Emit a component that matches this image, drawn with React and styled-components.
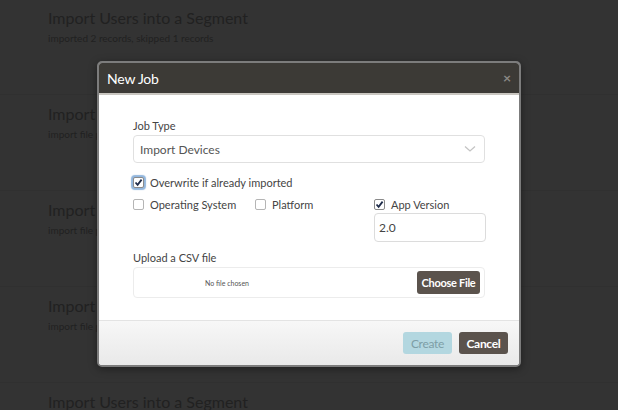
import React from 'react';
import styled, { createGlobalStyle } from 'styled-components';

const GlobalStyle = createGlobalStyle`
  html, body {
    margin: 0;
    padding: 0;
    background: #333333;
    font-family: Lato, "Open Sans", sans-serif;
  }
`;

const Page = styled.div`
  position: relative;
  width: 618px;
  height: 410px;
  overflow: hidden;
  background: #333333;
`;

const JobList = styled.ul`
  list-style: none;
  margin: 0;
  padding: 0;
`;

const JobItem = styled.li`
  height: 95px;
  padding: 8px 0 0 48px;
  box-sizing: border-box;
  border-bottom: 1px solid #303030;
  margin-bottom: 1px;
`;

const JobTitle = styled.div`
  font-size: 16px;
  line-height: 20px;
  color: #212121;
`;

const JobMeta = styled.div`
  font-size: 10px;
  line-height: 14px;
  margin-top: 3px;
  color: #212121;
`;

const Modal = styled.div`
  position: absolute;
  left: 97px;
  top: 61px;
  width: 424px;
  height: 306px;
  box-sizing: border-box;
  border: 2px solid #7c7c7c;
  border-radius: 5px;
  overflow: hidden;
  display: flex;
  flex-direction: column;
  background: #fff;
  box-shadow: 0 2px 8px rgba(0, 0, 0, 0.4);
`;

const Header = styled.div`
  height: 32px;
  flex: none;
  display: flex;
  align-items: center;
  justify-content: space-between;
  padding: 0 8px;
  background: #3c3a36;
  border-bottom: 2px solid #c9c6c0;
  box-sizing: border-box;
`;

const HeaderTitle = styled.div`
  color: #fff;
  font-size: 14px;
  letter-spacing: -0.2px;
`;

const Close = styled.span`
  color: #8a8884;
  font-size: 14px;
  font-weight: 700;
  line-height: 1;
`;

const Body = styled.div`
  flex: 1;
  padding: 24px 34px 0 34px;
  display: flex;
  flex-direction: column;
`;

const Label = styled.div`
  font-size: 11px;
  line-height: 14px;
  color: #444;
  margin-top: ${p => p.$top || 0}px;
`;

const Select = styled.div`
  margin-top: 2px;
  height: 28px;
  box-sizing: border-box;
  border: 1px solid #e0e0e0;
  border-radius: 4px;
  display: flex;
  align-items: center;
  justify-content: space-between;
  padding: 0 8px 0 6px;
  font-size: 12px;
  color: #555;
`;

const CheckLine = styled.div`
  display: flex;
  margin-top: 11px;
`;

const CheckRow = styled.div`
  display: grid;
  grid-template-columns: 122px 119px 113px;
  margin-top: 6px;
`;

const CheckCell = styled.div`
  display: flex;
  flex-direction: column;
`;

const Check = styled.label`
  display: flex;
  align-items: center;
  gap: 6px;
  height: 16px;
  font-size: 11px;
  color: #444;
  white-space: nowrap;
`;

const Box = styled.span`
  width: 11px;
  height: 11px;
  box-sizing: border-box;
  border: 1px solid ${p => (p.$checked ? '#8a8a8a' : '#b5b5b5')};
  border-radius: 2px;
  background: #fff;
  display: flex;
  align-items: center;
  justify-content: center;
  box-shadow: ${p => (p.$focus ? '0 0 1px 2px #92b6dd' : 'none')};
`;

const TextInput = styled.div`
  margin-top: 1px;
  height: 29px;
  width: 112px;
  box-sizing: border-box;
  border: 1px solid #dcdcdc;
  border-radius: 4px;
  display: flex;
  align-items: center;
  padding-left: 4px;
  font-size: 12px;
  color: #444;
`;

const FileBox = styled.div`
  margin-top: 2px;
  height: 31px;
  box-sizing: border-box;
  border: 1px solid #ececec;
  border-radius: 4px;
  display: flex;
  align-items: center;
  justify-content: space-between;
  padding: 0 4px 0 71px;
`;

const NoFile = styled.span`
  font-size: 7px;
  color: #555;
`;

const Button = styled.button`
  font-family: Lato, "Open Sans", sans-serif;
  border: none;
  border-radius: 3px;
  padding: 0;
  width: ${p => p.$w}px;
  height: ${p => p.$h}px;
  font-size: ${p => p.$size || 11}px;
  font-weight: ${p => (p.$light ? 400 : 700)};
  letter-spacing: -0.3px;
  background: ${p => p.$bg};
  color: ${p => p.$color};
`;

const Footer = styled.div`
  height: 45px;
  flex: none;
  box-sizing: border-box;
  border-top: 1px solid #e3e3e3;
  background: linear-gradient(#f7f7f7, #e9e9e9);
  display: flex;
  align-items: center;
  justify-content: flex-end;
  gap: 7px;
  padding: 0 11px 0 0;
`;

const CheckMark = () => (
  <svg width="9" height="9" viewBox="0 0 9 9">
    <path d="M1.5 4.5 L3.6 6.8 L7.6 1.6" fill="none" stroke="#1f2c4a" strokeWidth="1.8" />
  </svg>
);

const Checkbox = ({ checked, focus, children }) => (
  <Check>
    <Box $checked={checked} $focus={focus}>{checked && <CheckMark />}</Box>
    {children}
  </Check>
);

const jobs = [
  { title: 'Import Users into a Segment', meta: 'imported 2 records, skipped 1 records' },
  { title: 'Import Users', meta: 'import file processed' },
  { title: 'Import Users', meta: 'import file processed' },
  { title: 'Import Users', meta: 'import file processed' },
  { title: 'Import Users into a Segment', meta: 'imported 2 records' },
];

export default function App() {
  return (
    <Page>
      <GlobalStyle />
      <JobList>
        {jobs.map((j, i) => (
          <JobItem key={i}>
            <JobTitle>{j.title}</JobTitle>
            <JobMeta>{j.meta}</JobMeta>
          </JobItem>
        ))}
      </JobList>

      <Modal>
        <Header>
          <HeaderTitle>New Job</HeaderTitle>
          <Close>×</Close>
        </Header>
        <Body>
          <Label>Job Type</Label>
          <Select>
            Import Devices
            <svg width="12" height="8" viewBox="0 0 12 8">
              <path d="M1 1.5 L6 6 L11 1.5" fill="none" stroke="#c4c4c4" strokeWidth="1.3" />
            </svg>
          </Select>
          <CheckLine>
            <Checkbox checked focus>Overwrite if already imported</Checkbox>
          </CheckLine>
          <CheckRow>
            <CheckCell>
              <Checkbox>Operating System</Checkbox>
            </CheckCell>
            <CheckCell>
              <Checkbox>Platform</Checkbox>
            </CheckCell>
            <CheckCell>
              <Checkbox checked>App Version</Checkbox>
              <TextInput>2.0</TextInput>
            </CheckCell>
          </CheckRow>
          <Label $top={9}>Upload a CSV file</Label>
          <FileBox>
            <NoFile>No file chosen</NoFile>
            <Button $w={63} $h={23} $bg="#5b534d" $color="#fff">Choose File</Button>
          </FileBox>
        </Body>
        <Footer>
          <Button $w={49} $h={22} $size={12} $light $bg="#b3d7e0" $color="#7d9ea6">Create</Button>
          <Button $w={49} $h={22} $size={12} $bg="#5b534d" $color="#fff">Cancel</Button>
        </Footer>
      </Modal>
    </Page>
  );
}
